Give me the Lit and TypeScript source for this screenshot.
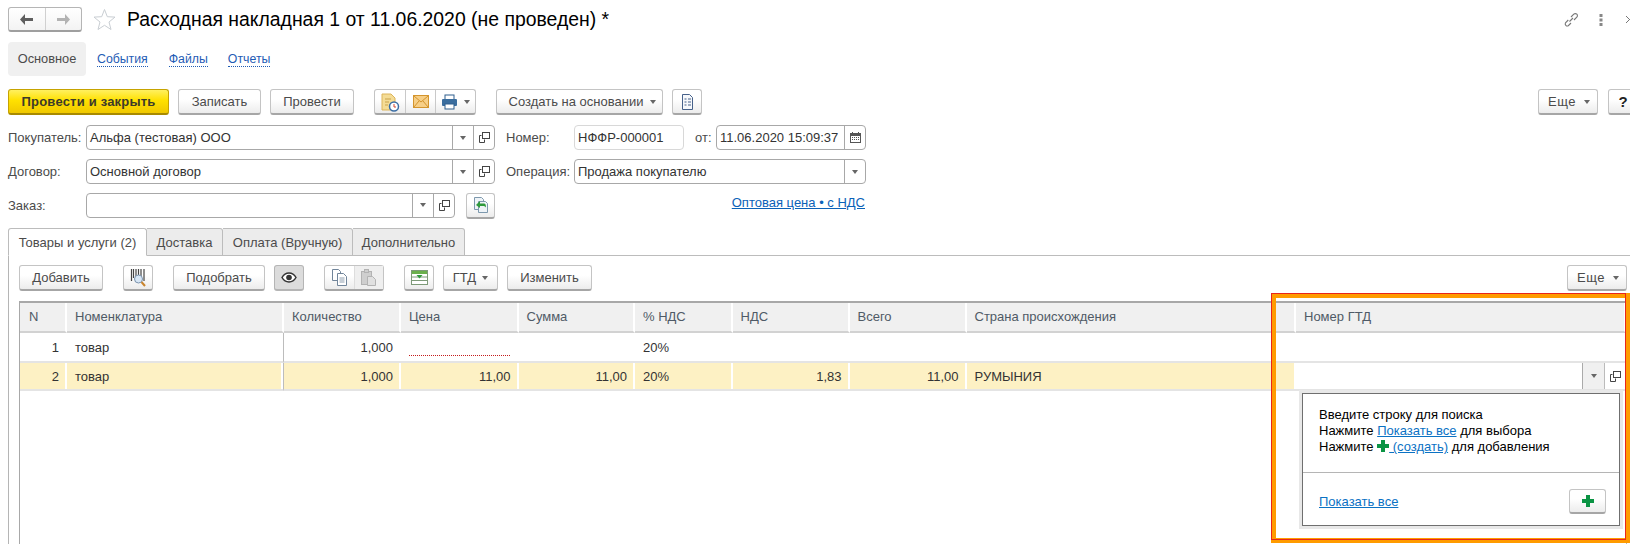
import { LitElement, html, css, svg } from "lit";
import { customElement } from "lit/decorators.js";

const arrow = svg`<path d="M6 3 1 8.500l5 5.500v-4h8V7H6z"/>`;
const chev = html`<span class="chev"></span>`;
const openIcon = html`<svg width="13" height="13" viewBox="0 0 13 13" fill="none" stroke="#444"><path d="M3.500 4.500h-2v7h5v-3"/><rect x="4.500" y="1.500" width="7" height="6" fill="#fff"/></svg>`;

const ddField = (cls: string, text: string) => html`<div class="field ${cls}"><span class="val">${text}</span><span class="side">${chev}</span><span class="side">${openIcon}</span></div>`;

const plus = html`<svg width="14" height="14" viewBox="0 0 14 14"><path d="M5 1h4v4h4v4H9v4H5V9H1V5h4z" fill="#0b9444"/></svg>`;

const columns = ["N","Номенклатура","Количество","Цена","Сумма","% НДС","НДС","Всего","Страна происхождения","Номер ГТД"];

@customElement("app-root")
export class AppRoot extends LitElement {
  static styles = css`
    :host { display: block; position: relative; width: 1630px; height: 545px; overflow: hidden; background: #fff;
      font-family: "Liberation Sans", Arial, sans-serif; font-size: 13px; color: #4b4b4b; }
    * { box-sizing: border-box; }
    svg { display: block; flex: none; }
    .head { display: flex; align-items: center; height: 25px; margin-top: 7px; padding-left: 8px; }
    .nav { display: flex; width: 74px; height: 25px; border: 1px solid #b5b5b5; border-bottom: 2px solid #9f9f9f; border-radius: 3px; background: linear-gradient(#fff, #f3f3f3); }
    .nav span { flex: 1; display: flex; align-items: center; justify-content: center; }
    .nav span + span { border-left: 1px solid #d0d0d0; }
    .star { margin: 0 11px 0 11px; }
    h1 { margin: 0; font-weight: 400; font-size: 19.400px; color: #000; white-space: nowrap; }
    .tools { margin-left: auto; display: flex; align-items: center; }
    .dots { margin-left: 20px; }
    .close { margin-left: 22px; margin-right: -4px; }
    .tabsTop { display: flex; align-items: center; height: 34px; margin: 10px 0 13px 8px; }
    .sel { width: 78px; height: 34px; line-height: 34px; text-align: center; background: #f0f0f0; border-radius: 4px; color: #4b4b4b; font-size: 12.800px; }
    .sec { color: #1f5cb5; font-size: 12.300px; margin-left: 11px; border-bottom: 1px dotted #1f5cb5; line-height: 14px; }
    .sec.o { margin-left: 21px; } .sec.d { margin-left: 20px; }
    .bar { display: flex; height: 26px; padding-left: 8px; }
    .btn { display: flex; align-items: center; justify-content: center; gap: 6px; flex: none; height: 26px; border: 1px solid #c4c4c4; border-bottom: 2px solid #a6a6a6; border-radius: 3px;
      background: linear-gradient(#fff 40%, #ececec); color: #4b4b4b; white-space: nowrap; }
    .chev { display: inline-block; flex: none; width: 0; height: 0; border: 3.500px solid transparent; border-top: 4px solid #666; border-bottom: 0; }
    .primary { width: 161px; background: linear-gradient(#fff060, #ffe100 45%, #f0c800); border-color: #c6a300; border-bottom-color: #a88a00; color: #3c3a2a; font-weight: 700; letter-spacing: .2px; }
    .b-zap { width: 83px; margin-left: 9px; }
    .b-prov { width: 84px; margin-left: 9px; }
    .grp { display: flex; flex: none; margin-left: 20px; height: 26px; border: 1px solid #c4c4c4; border-bottom: 2px solid #a6a6a6; border-radius: 3px; background: linear-gradient(#fff 40%, #ececec); }
    .grp > span { display: flex; align-items: center; justify-content: center; gap: 6px; }
    .grp > span + span { border-left: 1px solid #c9c9c9; }
    .g-print { width: 102px; }
    .g1 { width: 30px; } .g2 { width: 30px; } .g3 { flex: 1; }
    .b-osn { width: 167px; margin-left: 20px; padding-left: 6px; gap: 7px; }
    .b-doc { width: 30px; margin-left: 9px; }
    .b-more { width: 60px; margin-left: auto; gap: 8px; letter-spacing: .5px; padding-left: 2px; }
    .b-help { width: 30px; margin-left: 10px; margin-right: -8px; font-weight: 700; color: #222; font-size: 15px; }
    .form { display: grid; grid-template-columns: 78px 409px 11px 68px 110px 11px 21px 150px; grid-auto-rows: 25px; row-gap: 9px; margin: 10px 0 0 8px; align-items: center; }
    .lbl { white-space: nowrap; }
    .field { display: flex; align-items: stretch; height: 25px; border: 1px solid #a8a8a8; border-radius: 4px; background: #fff; color: #333; line-height: 23px; }
    .val { flex: 1; padding-left: 3px; white-space: nowrap; overflow: hidden; }
    .side { flex: none; width: 21px; border-left: 1px solid #a8a8a8; display: flex; align-items: center; justify-content: center; }
    .plain { border-color: #d8d8d8; }
    .span-i { grid-column: 2; }
    .n-lbl { grid-column: 4; }
    .num { grid-column: 5; }
    .ot { grid-column: 6 / 8; padding-left: 11px; }
    .dt { grid-column: 8; }
    .op { grid-column: 5 / 9; }
    .row3 { grid-column: 2 / 3; display: flex; gap: 11px; align-items: flex-start; }
    .row3 .field { width: 369px; }
    .row3 .btn { width: 29px; height: 26px; }
    .price { grid-column: 4 / 9; text-align: right; color: #0b62b8; text-decoration: underline; margin-top: -7px; padding-right: 1px; }
    .tabs { display: flex; margin: 10px 0 0 8px; height: 28px; border-bottom: 1px solid #bcbcbc; }
    .tab { height: 28px; padding-top: 6px; text-align: center; border: 1px solid #bcbcbc; border-left: 0; border-radius: 0 3px 0 0; background: #ececec; color: #4b4b4b; }
    .t1 { width: 139px; background: #fff; border-left: 1px solid #bcbcbc; border-bottom-color: #fff; border-radius: 3px 3px 0 0; }
    .t2 { width: 76px; } .t3 { width: 130px; } .t4 { width: 112px; }
    .panel { margin-left: 8px; height: 288px; border-left: 1px solid #b5b5b5; padding: 9px 0 0 10px; }
    .bar2 { display: flex; height: 26px; padding-right: 3px; }
    .bar2 .grp { margin-left: 20px; }
    .b-add { width: 84px; }
    .b-bc { width: 30px; margin-left: 20px; }
    .b-pick { width: 92px; margin-left: 20px; }
    .b-eye { width: 30px; margin-left: 9px; background: #dcdcdc; border-color: #b5b5b5; }
    .grp.g-copy { width: 60px; }
    .grp.g-copy > span { flex: 1; }
    .grp.g-copy > span + span { background: #efefef; border-left-color: #ddd; }
    .b-gr { width: 30px; margin-left: 20px; }
    .b-gtd { width: 55px; margin-left: 9px; }
    .b-chg { width: 85px; margin-left: 9px; }
    .table { display: grid; grid-template-columns: 47px 217px 117px 117.500px 116.500px 97.500px 117px 117px 329.500px 1fr; margin-top: 10px; margin-right: 3px; height: 243px; grid-template-rows: 30px 30px 28px 1fr;
      border-top: 2px solid #a8a8a8; border-left: 1px solid #a8a8a8; border-right: 1px solid #b5b5b5; color: #333; }
    .th { background: #f0f0f0; border-right: 2px solid #fff; border-bottom: 2px solid #d2d2d2; padding: 6px 8px; color: #4f5a66; white-space: nowrap; }
    .th.first { padding-left: 9px; }
    .td { padding: 7px 8px 0; border-bottom: 2px solid #e4e4e4; white-space: nowrap; }
    .r { text-align: right; }
    .hl { padding-top: 6px; background: #fdf1c4; box-shadow: inset -2px 0 #fff; }
    .div { border-right: 1px solid #bcbcbc; }
    .redl { display: block; border-bottom: 1px dotted #c41c1c; height: 16px; margin-right: 1px; }
    .edit { display: flex; justify-content: flex-end; border-bottom: 2px solid #e4e4e4; }
    .edit > span { display: flex; align-items: center; justify-content: center; width: 22px; border-left: 1px solid #aaa; background: #f0f0f0; }
    .edit > span + span { background: #fff; border-left-color: #bbb; }
    .popup { position: absolute; left: 1299px; top: 390px; width: 324px; height: 139px; background: #fff; border: 3px solid #e8e8e8; }
    .inner { width: 100%; height: 100%; border: 1px solid #6f6f6f; background: #fff; color: #000; display: flex; flex-direction: column; }
    .msg { height: 79px; padding: 13px 16px 0; line-height: 16px; flex: none; border-bottom: 1px solid #b5b5b5; }
    .msg a, .foot a { color: #0b72c4; text-decoration: underline; }
    .msg svg { display: inline-block; vertical-align: -1px; }
    .foot { flex: 1; display: flex; align-items: center; justify-content: space-between; padding: 5px 13px 0 16px; }
    .plusb { width: 37px; height: 25px; }
    .frame { position: absolute; left: 1271px; top: 293px; width: 359px; height: 250px; border: 5px solid #ff9b00; pointer-events: none; }
    .frame2 { position: absolute; left: 1271px; top: 293px; width: 355px; height: 247px; border: 1px solid #e8261c; pointer-events: none; }
  `;

  render() {
    return html`
      <div class="head">
        <div class="nav">
          <span><svg width="15" height="17" viewBox="0 0 15 17" fill="#5f5f5f">${arrow}</svg></span>
          <span><svg width="15" height="17" viewBox="0 0 15 17" fill="#b3b3b3"><g transform="matrix(-1 0 0 1 15 0)">${arrow}</g></svg></span>
        </div>
        <svg class="star" width="23" height="23" viewBox="0 0 23 23" fill="none" stroke="#c9ced3"><path d="M11.500 1.500 14.300 8.700 22 9.100 16 14 18 21.500 11.500 17.300 5 21.500 7 14 1 9.100 8.700 8.700z"/></svg>
        <h1>Расходная накладная 1 от 11.06.2020 (не проведен) *</h1>
        <div class="tools">
          <svg width="16" height="16" viewBox="0 0 16 16" fill="none" stroke="#777" stroke-width="1.100"><path d="M6.500 9.500 10 6M5.300 8 2.500 10.800a2.100 2.100 0 0 0 2.800 2.900L8 11M8 5l2.800-2.800a2.100 2.100 0 0 1 3 3L11 8"/></svg>
          <svg class="dots" width="4" height="12" viewBox="0 0 4 12" fill="#888"><rect x="0.500" y="0" width="3" height="3"/><rect x="0.500" y="4.500" width="3" height="3"/><rect x="0.500" y="9" width="3" height="3"/></svg>
          <svg class="close" width="9" height="9" viewBox="0 0 9 9" fill="none" stroke="#777"><path d="M1 1l7 7M8 1 1 8"/></svg>
        </div>
      </div>
      <div class="tabsTop">
        <div class="sel">Основное</div>
        <span class="sec">События</span>
        <span class="sec o">Файлы</span>
        <span class="sec d">Отчеты</span>
      </div>
      <div class="bar">
        <div class="btn primary">Провести и закрыть</div>
        <div class="btn b-zap">Записать</div>
        <div class="btn b-prov">Провести</div>
        <div class="grp g-print">
          <span class="g1"><svg width="20" height="20" viewBox="0 0 20 20"><path d="M2 2h9l4 4v12H2z" fill="#f4dc96" stroke="#dcb45a"/><path d="M5 7h6M5 10h4M5 13h3" stroke="#c9a24a"/><circle cx="14" cy="14.500" r="4.500" fill="#fff" stroke="#3b6ea5" stroke-width="1.500"/><path d="M14 12v3h2" stroke="#d2452e" fill="none"/></svg></span>
          <span class="g2"><svg width="16" height="13" viewBox="0 0 16 13"><rect x=".5" y=".5" width="15" height="12" fill="#f7cf87" stroke="#d4952e"/><path d="M1 1l7 6 7-6M1 12l5-6M15 12l-5-6" fill="none" stroke="#d4952e"/></svg></span>
          <span class="g3"><svg width="17" height="16" viewBox="0 0 17 16"><rect x="4" y="1" width="9" height="5" fill="#fff" stroke="#2f5f8e"/><rect x="1" y="5" width="15" height="7" rx="1" fill="#3a6d9e"/><rect x="4" y="10" width="9" height="5" fill="#fff" stroke="#2f5f8e"/></svg>${chev}</span>
        </div>
        <div class="btn b-osn">Создать на основании ${chev}</div>
        <div class="btn b-doc"><svg width="13" height="16" viewBox="0 0 13 16" fill="none" stroke="#46618a"><path d="M1.500 .5h7l3 3v12h-10z" fill="#f6f8fb"/><path d="M3.500 5h2M7 5h3M3.500 8h2M7 8h3M3.500 11h2M7 11h3"/></svg></div>
        <div class="btn b-more">Еще ${chev}</div>
        <div class="btn b-help">?</div>
      </div>
      <div class="form">
        <span class="lbl">Покупатель:</span>
        ${ddField("span-i", "Альфа (тестовая) ООО")}
        <span class="lbl n-lbl">Номер:</span>
        <div class="field plain num"><span class="val">НФФР-000001</span></div>
        <span class="lbl ot">от:</span>
        <div class="field dt"><span class="val">11.06.2020 15:09:37</span><span class="side"><svg width="11" height="11" viewBox="0 0 11 11" fill="#555"><path d="M2 0h1v1h5V0h1v1h2v10H0V1h2zM1 4v6h9V4z"/><path d="M2 5h1v1H2zM4 5h1v1H4zM6 5h1v1H6zM8 5h1v1H8zM2 7h1v1H2zM4 7h1v1H4zM6 7h1v1H6zM8 7h1v1H8z"/></svg></span></div>
        <span class="lbl">Договор:</span>
        ${ddField("span-i", "Основной договор")}
        <span class="lbl n-lbl">Операция:</span>
        <div class="field op"><span class="val">Продажа покупателю</span><span class="side">${chev}</span></div>
        <span class="lbl">Заказ:</span>
        <div class="row3">
          ${ddField("", "")}
          <div class="btn"><svg width="16" height="16" viewBox="0 0 16 16"><path d="M1.500 .5h7l2 2v10h-9z" fill="#eef3f7" stroke="#7d98ad"/><path d="M5.500 4.500h7l2 2v9h-9z" fill="#eef3f7" stroke="#7d98ad"/><path d="M3 8l4-4v2.500h4c1.500 0 2 1.500 2 4-1-1.500-2-1.500-3-1.500H7V11z" fill="#2e9a3c"/></svg></div>
        </div>
        <a class="price">Оптовая цена • с НДС</a>
      </div>
      <div class="tabs">
        <div class="tab t1">Товары и услуги (2)</div>
        <div class="tab t2">Доставка</div>
        <div class="tab t3">Оплата (Вручную)</div>
        <div class="tab t4">Дополнительно</div>
      </div>
      <div class="panel">
        <div class="bar2">
          <div class="btn b-add">Добавить</div>
          <div class="btn b-bc"><svg width="16" height="18" viewBox="0 0 16 18" fill="none"><path d="M1.500 0v12M3.500 0v9M6 0v7M8.500 0v6M11 0v7M14 0v12" stroke="#444" stroke-width="1.200"/><circle cx="8.500" cy="10" r="4" fill="#d7e6f5" stroke="#7b93ad"/><path d="M11.500 13l3.500 4" stroke="#c9852f" stroke-width="2"/></svg></div>
          <div class="btn b-pick">Подобрать</div>
          <div class="btn b-eye"><svg width="16" height="11" viewBox="0 0 16 11"><path d="M1 5.500C3 2 5.500 1 8 1s5 1 7 4.500C13 9 10.500 10 8 10S3 9 1 5.500z" fill="#fff" stroke="#333" stroke-width="1.500"/><circle cx="8" cy="5.500" r="2.800" fill="#333"/></svg></div>
          <div class="grp g-copy">
            <span><svg width="15" height="17" viewBox="0 0 15 17" fill="#fff" stroke="#71859a"><path d="M.5.5h6l2 2v9h-8z"/><path d="M5.500 4.500h6l3 3v9h-9z"/><path d="M7.500 9h5M7.500 11h5M7.500 13h5" stroke-width=".8"/></svg></span>
            <span><svg width="15" height="17" viewBox="0 0 15 17" stroke="#b3b3b3" fill="#cfcfcf"><rect x=".5" y="2.500" width="10" height="13"/><rect x="3.500" y=".5" width="4" height="3"/><path d="M6.500 7.500h5l3 3v6h-8z" fill="#e0e0e0"/></svg></span>
          </div>
          <div class="btn b-gr"><svg width="17" height="15" viewBox="0 0 17 15"><rect x=".5" y=".5" width="16" height="14" fill="#fff" stroke="#7d9a78"/><rect x="1" y="1" width="15" height="3" fill="#6ab04c"/><path d="M1 7h15M1 10.500h15" stroke="#7d9a78"/><path d="M5.500 5h6l-3 3.500z" fill="#2e9a3c"/></svg></div>
          <div class="btn b-gtd">ГТД ${chev}</div>
          <div class="btn b-chg">Изменить</div>
          <div class="btn b-more">Еще ${chev}</div>
        </div>
        <div class="table">
          ${columns.map((c, i) => html`<div class="th ${i === 0 ? "first" : ""}">${c}</div>`)}
          <div class="td r">1</div><div class="td div">товар</div><div class="td r">1,000</div><div class="td"><span class="redl"></span></div><div class="td"></div><div class="td">20%</div><div class="td"></div><div class="td"></div><div class="td"></div><div class="td"></div>
          <div class="td r hl">2</div><div class="td hl div">товар</div><div class="td r hl">1,000</div><div class="td r hl">11,00</div><div class="td r hl">11,00</div><div class="td hl">20%</div><div class="td r hl">1,83</div><div class="td r hl">11,00</div><div class="td hl">РУМЫНИЯ</div>
          <div class="edit"><span>${chev}</span><span>${openIcon}</span></div>
        </div>
      </div>
      <div class="popup">
        <div class="inner">
          <div class="msg">
            Введите строку для поиска<br />
            Нажмите <a>Показать все</a> для выбора<br />
            Нажмите <svg width="12" height="12" viewBox="1 1 12 12"><path d="M5 1h4v4h4v4H9v4H5V9H1V5h4z" fill="#0b9444"/></svg><a>&nbsp;(создать)</a> для добавления
          </div>
          <div class="foot"><a>Показать все</a><div class="btn plusb">${plus}</div></div>
        </div>
      </div>
      <div class="frame"></div>
      <div class="frame2"></div>
    `;
  }
}
